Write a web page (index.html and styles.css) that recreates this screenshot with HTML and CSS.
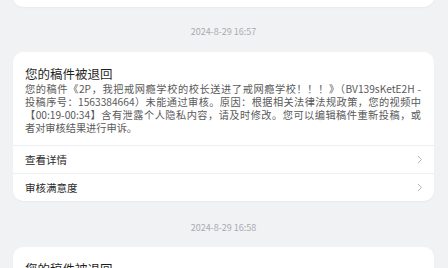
FILE: index.html
```html
<!DOCTYPE html>
<html lang="zh">
<head>
<meta charset="utf-8">
<link rel="stylesheet" href="styles.css">
</head>
<body>
<div class="feed">
  <div class="card card-prev"></div>

  <div class="time">2024-8-29 16:57</div>
  <div class="card">
    <div class="content">
      <div class="title">您的稿件被退回</div>
      <div class="body">
        <div class="ln">您的稿件《2P，我把戒网瘾学校的校长送进了戒网瘾学校！！！》（BV139sKetE2H&nbsp;-</div>
        <div class="ln">投稿序号：1563384664）未能通过审核。原因：根据相关法律法规政策，您的视频中</div>
        <div class="ln">【00:19-00:34】含有泄露个人隐私内容，请及时修改。您可以编辑稿件重新投稿，或</div>
        <div class="ln last">者对审核结果进行申诉。</div>
      </div>
    </div>
    <div class="row"><span>查看详情</span><svg class="chev" width="6" height="9" viewBox="0 0 6 9"><path d="M1 1 L4.5 4.5 L1 8" fill="none" stroke="#b8b8b8" stroke-width="1"/></svg></div>
    <div class="row"><span>审核满意度</span><svg class="chev" width="6" height="9" viewBox="0 0 6 9"><path d="M1 1 L4.5 4.5 L1 8" fill="none" stroke="#b8b8b8" stroke-width="1"/></svg></div>
  </div>

  <div class="time time2">2024-8-29 16:58</div>
  <div class="card">
    <div class="content">
      <div class="title">您的稿件被退回</div>
    </div>
  </div>
</div>
</body>
</html>
```
FILE: styles.css
```css
html, body {
  margin: 0;
  padding: 0;
  background: #f1f2f4;
  overflow: hidden;
  font-family: "Noto Sans CJK SC", "Noto Sans", sans-serif;
}
.feed {
  display: flex;
  flex-direction: column;
  padding: 0 14px 0 13px;
  margin-top: -40px;
}
.card {
  background: #fff;
  border-radius: 10px;
  box-shadow: 0 1px 2px rgba(0,0,0,0.04);
}
.card-prev {
  height: 47px;
}
.time {
  text-align: center;
  font-size: 9px;
  line-height: 14px;
  color: #a9abaf;
  margin: 18px 0 13px;
}
.time2 {
  margin: 20px 0 12px;
}
.content {
  padding: 14px 13px 11px 12px;
}
.title {
  font-size: 12.5px;
  line-height: 16px;
  color: #1f1f1f;
}
.body {
  font-size: 10.2px;
  line-height: 13px;
  color: #5a5a5a;
}
.ln {
  white-space: nowrap;
  text-align: justify;
  text-align-last: justify;
}
.ln.last {
  text-align-last: left;
}
.row {
  display: flex;
  align-items: center;
  justify-content: space-between;
  height: 28px;
  border-top: 1px solid #eeeff1;
  box-sizing: border-box;
  padding: 0 11px 0 12px;
  font-size: 10.5px;
  color: #2b2b2b;
}
.chev {
  display: block;
}
```
